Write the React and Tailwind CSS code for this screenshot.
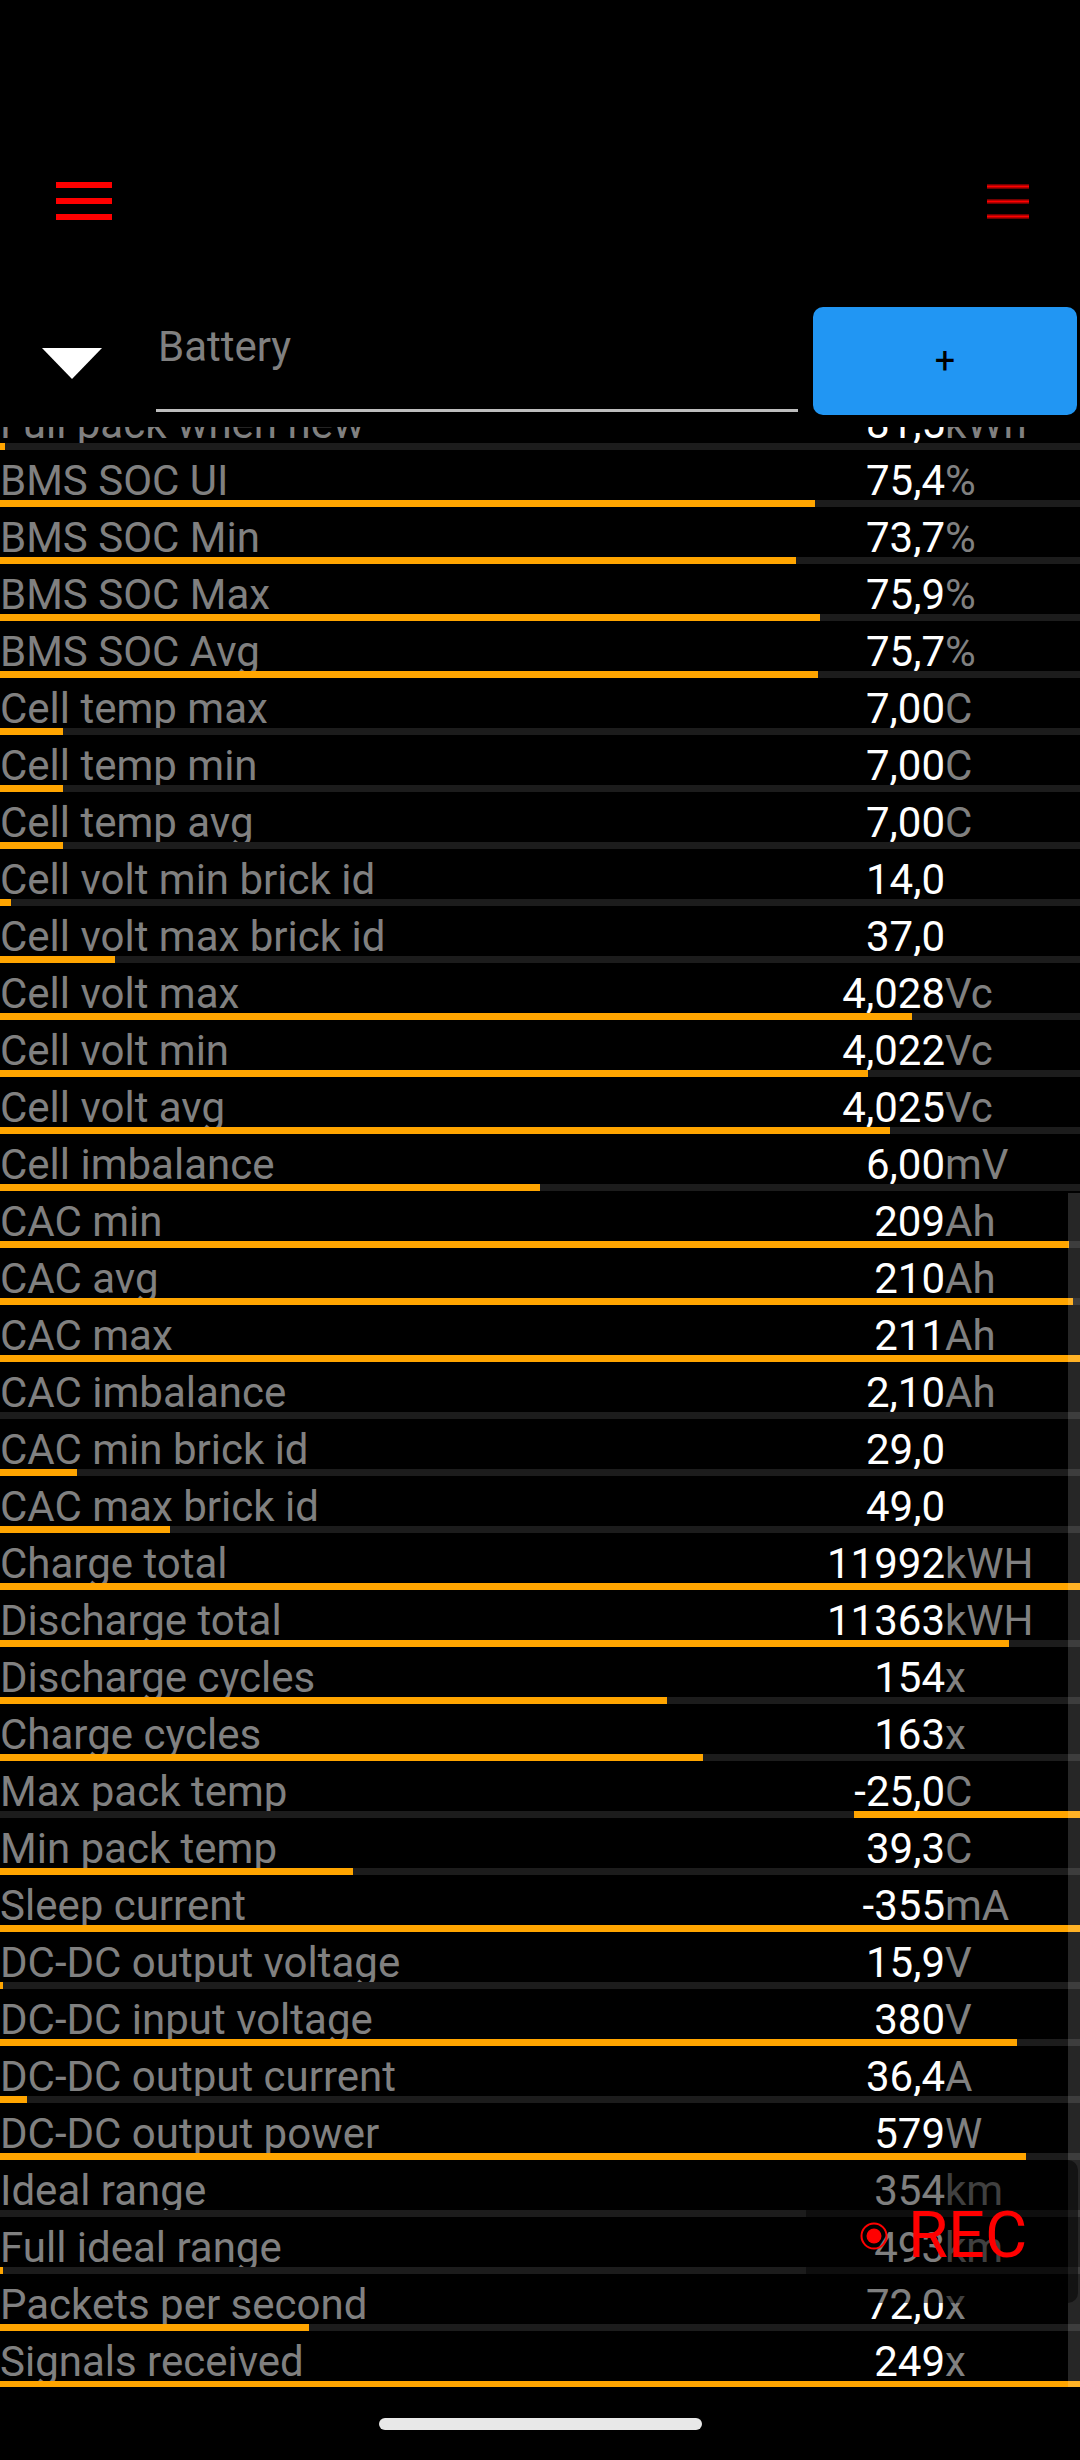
import React from 'react';

const rows = [
  { label: 'Full pack when new', value: '81,5', unit: 'kWh', bar: 5 },
  { label: 'BMS SOC UI', value: '75,4', unit: '%', bar: 815 },
  { label: 'BMS SOC Min', value: '73,7', unit: '%', bar: 796 },
  { label: 'BMS SOC Max', value: '75,9', unit: '%', bar: 820 },
  { label: 'BMS SOC Avg', value: '75,7', unit: '%', bar: 818 },
  { label: 'Cell temp max', value: '7,00', unit: 'C', bar: 63 },
  { label: 'Cell temp min', value: '7,00', unit: 'C', bar: 63 },
  { label: 'Cell temp avg', value: '7,00', unit: 'C', bar: 63 },
  { label: 'Cell volt min brick id', value: '14,0', unit: '', bar: 11 },
  { label: 'Cell volt max brick id', value: '37,0', unit: '', bar: 115 },
  { label: 'Cell volt max', value: '4,028', unit: 'Vc', bar: 912 },
  { label: 'Cell volt min', value: '4,022', unit: 'Vc', bar: 868 },
  { label: 'Cell volt avg', value: '4,025', unit: 'Vc', bar: 890 },
  { label: 'Cell imbalance', value: '6,00', unit: 'mV', bar: 540 },
  { label: 'CAC min', value: '209', unit: 'Ah', bar: 1069 },
  { label: 'CAC avg', value: '210', unit: 'Ah', bar: 1073 },
  { label: 'CAC max', value: '211', unit: 'Ah', bar: 1080 },
  { label: 'CAC imbalance', value: '2,10', unit: 'Ah', bar: 0 },
  { label: 'CAC min brick id', value: '29,0', unit: '', bar: 77 },
  { label: 'CAC max brick id', value: '49,0', unit: '', bar: 170 },
  { label: 'Charge total', value: '11992', unit: 'kWH', bar: 1080 },
  { label: 'Discharge total', value: '11363', unit: 'kWH', bar: 1009 },
  { label: 'Discharge cycles', value: '154', unit: 'x', bar: 667 },
  { label: 'Charge cycles', value: '163', unit: 'x', bar: 703 },
  { label: 'Max pack temp', value: '-25,0', unit: 'C', bar: 226, negative: true },
  { label: 'Min pack temp', value: '39,3', unit: 'C', bar: 353 },
  { label: 'Sleep current', value: '-355', unit: 'mA', bar: 1080 },
  { label: 'DC-DC output voltage', value: '15,9', unit: 'V', bar: 3 },
  { label: 'DC-DC input voltage', value: '380', unit: 'V', bar: 1017 },
  { label: 'DC-DC output current', value: '36,4', unit: 'A', bar: 27 },
  { label: 'DC-DC output power', value: '579', unit: 'W', bar: 1026 },
  { label: 'Ideal range', value: '354', unit: 'km', bar: 0 },
  { label: 'Full ideal range', value: '493', unit: 'km', bar: 3 },
  { label: 'Packets per second', value: '72,0', unit: 'x', bar: 309 },
  { label: 'Signals received', value: '249', unit: 'x', bar: 1080 },
];

const Row = ({ row }) => (
  <div className="h-[57px] flex flex-col">
    <div className="h-[50px] flex pt-[6px] text-[42px] leading-[50px] whitespace-nowrap">
      <div className="w-[945px] flex justify-between">
        <span className="text-[#808080]">{row.label}</span>
        <span className="text-white">{row.value}</span>
      </div>
      <span className="text-[#808080]">{row.unit}</span>
    </div>
    <div className="h-[7px] bg-[#1c1c1c] flex">
      <div
        className={`h-full bg-[#ffa500] ${row.negative ? 'ml-auto' : ''}`}
        style={{ width: row.bar }}
      />
    </div>
  </div>
);

const Hamburger = () => (
  <div className="flex flex-col gap-[10px] w-[56px]">
    <div className="h-[6px] bg-[#ff0000]" />
    <div className="h-[6px] bg-[#ff0000]" />
    <div className="h-[6px] bg-[#ff0000]" />
  </div>
);

const SoftHamburger = () => (
  <div className="flex flex-col gap-[10px] w-[42px] mt-[2px]">
    <div className="h-[5px] bg-linear-to-b from-[#500000] via-[#ff0000] to-[#500000]" />
    <div className="h-[5px] bg-linear-to-b from-[#500000] via-[#ff0000] to-[#500000]" />
    <div className="h-[5px] bg-linear-to-b from-[#500000] via-[#ff0000] to-[#500000]" />
  </div>
);

export default function App() {
  return (
    <div
      className="relative w-[1080px] h-[2460px] bg-black overflow-hidden"
      style={{ fontFamily: 'Roboto, "Noto Sans", sans-serif' }}
    >
      {/* top bar */}
      <div className="h-[307px] flex justify-between items-start pt-[182px] pl-[56px] pr-[51px]">
        <Hamburger />
        <SoftHamburger />
      </div>

      {/* selector row */}
      <div className="h-[108px] flex items-start">
        <div className="w-[156px] pt-[41px] pl-[42px]">
          <svg width="60" height="31" viewBox="0 0 60 31">
            <polygon points="0,0 60,0 30,31" fill="#ffffff" />
          </svg>
        </div>
        <div className="w-[642px] h-[105px] border-b-[3px] border-[#bdbdbd] pt-[15px] pl-[2px]">
          <span className="text-[42px] leading-[50px] text-[#808080]">Battery</span>
        </div>
        <button className="ml-[15px] w-[264px] h-[108px] rounded-[10px] bg-[#2196f3] flex items-center justify-center text-black text-[36px] leading-none">
          +
        </button>
      </div>

      {/* list */}
      <div className="mt-[12px] h-[1960px] overflow-hidden">
        <div className="-mt-[34px]">
          {rows.map((row) => (
            <Row key={row.label} row={row} />
          ))}
        </div>
      </div>

      {/* nav pill */}
      <div className="flex justify-center pt-[31px]">
        <div className="w-[323px] h-[12px] rounded-full bg-[#e8e8e8]" />
      </div>

      {/* scrollbar thumb */}
      <div className="absolute left-[1068px] top-[1193px] w-[12px] h-[1194px] bg-white/15" />

      {/* REC overlay */}
      <div className="absolute left-[806px] top-[2160px] w-[272px] h-[143px] rounded-[10px] bg-black/50 flex items-center pl-[54px] pt-[8px]">
        <svg width="28" height="28" viewBox="0 0 28 28">
          <circle cx="14" cy="14" r="12.5" fill="none" stroke="#ff0000" strokeWidth="2" />
          <circle cx="14" cy="14" r="7.5" fill="#ff0000" />
        </svg>
        <span className="ml-[20px] text-[65px] leading-none text-[#ff0000]">REC</span>
      </div>
    </div>
  );
}
